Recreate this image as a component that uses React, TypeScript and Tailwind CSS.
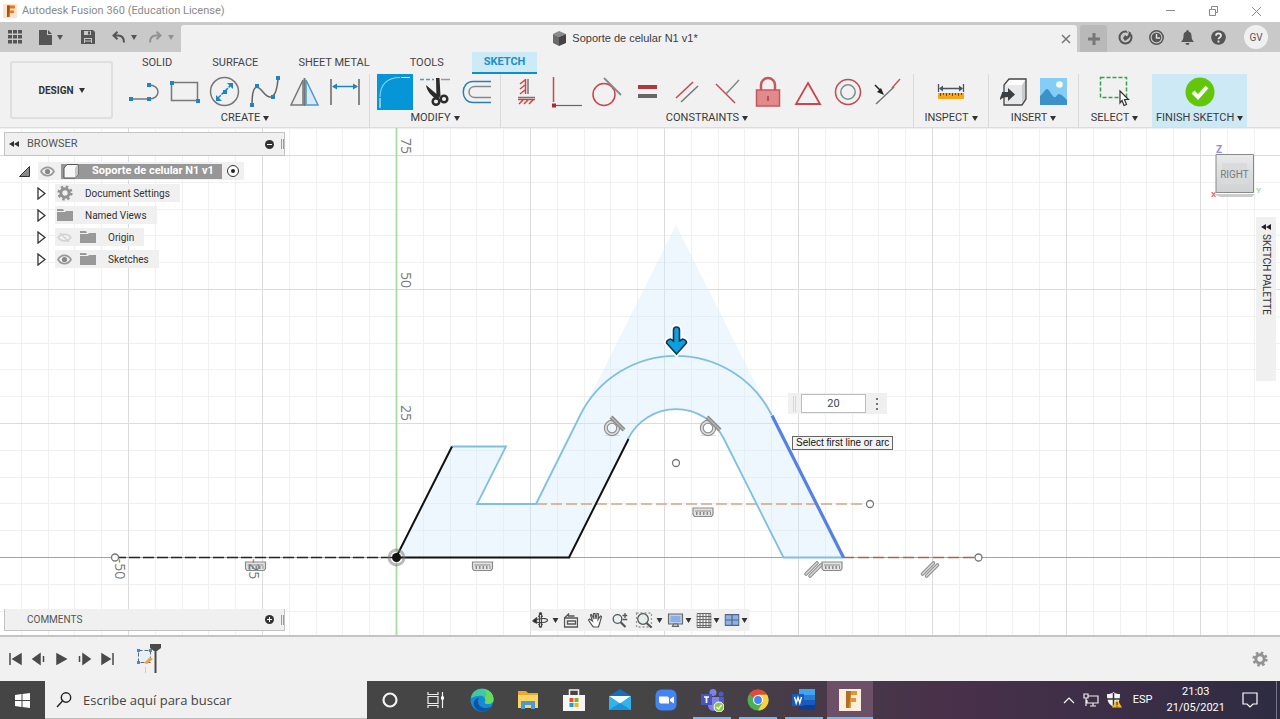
import React, { useState } from "react";

interface ToolProps {
  label: string;
  children: React.ReactNode;
  active?: boolean;
}

interface GroupProps {
  title: string;
  className?: string;
  last?: boolean;
  children: React.ReactNode;
}

const Caret = ({ className = "text-[#333]" }: { className?: string }) => (
  <svg width="6" height="5" viewBox="0 0 6 5" className={className}>
    <path d="M0 0h6L3 5z" fill="currentColor" />
  </svg>
);

const Tool = ({ label, children, active }: ToolProps) => (
  <button aria-label={label} className={active ? "h-9 w-9 bg-[#0696d7]" : "h-9 w-9"}>
    <svg width="36" height="36" viewBox="0 0 36 36" fill="none">
      {children}
    </svg>
  </button>
);

const Group = ({ title, className = "", last, children }: GroupProps) => (
  <div
    className={`flex flex-col items-center ${className} ${last ? "" : "border-r border-[#dadada]"}`}
  >
    <div className="flex gap-1">{children}</div>
    <button className="flex h-[18px] items-center gap-[3px] text-[11px] whitespace-nowrap text-[#3a3a3a]">
      {title}
      <Caret />
    </button>
  </div>
);

/* ---------- title bar and document tabs ---------- */

const TitleBar = () => (
  <header className="flex h-[22px] items-center bg-white pr-[18px] pl-[3px]">
    <svg width="14" height="14" viewBox="0 0 14 14">
      <rect width="14" height="14" rx="1" fill="#fbe3cd" />
      <path d="M4 1.500h8v3H7v2h4v2.500H7V13H4z" fill="#e07b1f" />
      <path d="M4 1.500h3L5.500 13H4z" fill="#a9500d" />
    </svg>
    <h1 className="ml-[5px] text-[11px] text-[#8a8a8a]">Autodesk Fusion 360 (Education License)</h1>
    <div className="ml-auto flex items-center gap-8 text-[#8a8a8a]">
      <button aria-label="Minimizar">
        <svg width="11" height="11" fill="none" stroke="currentColor">
          <path d="M1 4.500h9" />
        </svg>
      </button>
      <button aria-label="Restaurar">
        <svg width="11" height="11" fill="none" stroke="currentColor">
          <path d="M1.500 3.500h6v6h-6zM3.500 3V.5h6v6H8" />
        </svg>
      </button>
      <button aria-label="Cerrar">
        <svg width="11" height="11" fill="none" stroke="currentColor">
          <path d="M1 1l9 9M10 1l-9 9" />
        </svg>
      </button>
    </div>
  </header>
);

const TabBar = () => (
  <div className="flex h-[30px] items-end bg-[#c9c9c9] text-[#555]">
    <div className="flex h-full w-[181px] items-center pl-2">
      <button aria-label="Data panel">
        <svg width="14" height="14" fill="currentColor">
          {[0, 5, 10].map((y) =>
            [0, 5, 10].map((x) => <rect key={`${x}-${y}`} x={x} y={y} width="4" height="3.500" />)
          )}
        </svg>
      </button>
      <button aria-label="File" className="ml-[17px] flex items-center gap-[5px]">
        <svg width="13" height="15" fill="currentColor">
          <path d="M0 0h8v5h5v10H0zM9 0l4 4H9z" />
        </svg>
        <Caret className="text-[#555]" />
      </button>
      <button aria-label="Save" className="ml-[18px]">
        <svg width="14" height="14" viewBox="0 0 14 14">
          <path d="M0 0h12l2 2v12H0z" fill="currentColor" />
          <path d="M3 1h7v4H3zM3 8h8v5H3z" fill="#c9c9c9" />
          <path d="M7 1.500h2v3H7zM4 9h6v1.500H4zM4 11.500h6V13H4z" fill="currentColor" />
        </svg>
      </button>
      <button aria-label="Undo" className="ml-[17px] flex items-center gap-[6px]">
        <svg width="13" height="12" fill="none" stroke="currentColor" strokeWidth="2">
          <path d="M5.500 .8L1.500 4.500l4 3.700M2 4.500h4c4 0 6 2 6 7" />
        </svg>
        <Caret className="text-[#555]" />
      </button>
      <button aria-label="Redo" className="ml-3 flex items-center gap-[6px] text-[#929292]">
        <svg width="13" height="12" fill="none" stroke="currentColor" strokeWidth="2">
          <path d="M7.500 .8l4 3.700-4 3.700M11 4.500H7C3 4.500 1 6.500 1 11.500" />
        </svg>
        <Caret className="text-[#929292]" />
      </button>
    </div>

    <div className="flex h-[27px] flex-1 items-center rounded-t-[3px] bg-[#f1f1f1] pr-[6px] pl-2">
      <div className="flex flex-1 items-center justify-center gap-[5px] font-['Liberation_Sans',sans-serif] text-[11px] text-[#3c3c3c]">
        <svg width="15" height="15" viewBox="0 0 15 15">
          <path d="M1 3l6-3 7 3-7 3z" fill="#8a8a8a" />
          <path d="M1 3l6 3v9l-6-3z" fill="#6a6a6a" />
          <path d="M7 6l7-3v9l-7 3z" fill="#444" />
        </svg>
        Soporte de celular N1 v1*
      </div>
      <button aria-label="Close document">
        <svg width="10" height="10" fill="none" stroke="#777" strokeWidth="1.500">
          <path d="M1 1l8 8M9 1l-8 8" />
        </svg>
      </button>
    </div>

    <button
      aria-label="New design"
      className="ml-[3px] flex h-[27px] w-[27px] items-center justify-center rounded-t-[3px] bg-[#b9b9b9]"
    >
      <svg width="12" height="12" fill="none" stroke="#777" strokeWidth="3">
        <path d="M6 0v12M0 6h12" />
      </svg>
    </button>
    <div className="flex h-full items-center gap-4 pr-3 pl-[11px]">
      <button aria-label="Extensions">
        <svg width="15" height="15" viewBox="0 0 15 15" fill="none">
          <circle cx="7.500" cy="7.500" r="6" stroke="currentColor" strokeWidth="2" />
          <path d="M5 8l2-3 2 1.500L12 2l2 2-3.500 4.500L7 11z" fill="currentColor" />
          <path d="M9 0l1.500 3M13 4l2-1" stroke="#c9c9c9" strokeWidth="1.200" />
        </svg>
      </button>
      <button aria-label="Job status">
        <svg width="15" height="15" viewBox="0 0 15 15" fill="none">
          <circle cx="7.500" cy="7.500" r="6.700" stroke="currentColor" strokeWidth="1.500" />
          <circle cx="7.500" cy="7.500" r="4.800" fill="currentColor" />
          <path d="M7.500 4v4H11" stroke="#dedede" strokeWidth="1.500" />
        </svg>
      </button>
      <button aria-label="Notifications">
        <svg width="15" height="15" viewBox="0 0 15 15" fill="currentColor">
          <path d="M7.500 0c1 0 1.200.8 1.200 1.400C11 2 11.500 4 11.500 6c0 3 1 4 2.500 6H1c1.500-2 2.500-3 2.500-6 0-2 .5-4 2.800-4.600C6.300.8 6.500 0 7.500 0zM5.500 13h4a2 2 0 01-4 0z" />
        </svg>
      </button>
      <button aria-label="Help">
        <svg width="15" height="15" viewBox="0 0 15 15" fill="none">
          <circle cx="7.500" cy="7.500" r="7.300" fill="currentColor" />
          <path
            d="M5 5.700c0-3.200 5-3.200 5 0 0 1.800-2.500 1.700-2.500 3.600M7.500 10.500v2"
            stroke="#e6e6e6"
            strokeWidth="1.800"
          />
        </svg>
      </button>
      <button className="ml-[2px] h-6 w-6 rounded-full bg-[#f0f0f0] text-[10px] text-[#555]">
        GV
      </button>
    </div>
  </div>
);

/* ---------- ribbon ---------- */

const tabs = ["SOLID", "SURFACE", "SHEET METAL", "TOOLS", "SKETCH"];

const Ribbon = () => {
  const [tab, setTab] = useState("SKETCH");

  return (
    <div className="flex border-b border-[#dcdcdc] bg-[#f1f1f1]">
      <div className="pt-[9px] pr-2 pl-[10px]">
        <button className="flex h-[58px] w-[103px] items-center justify-center gap-[5px] rounded-[3px] border-2 border-[#dfdfdf] text-[10px] font-bold text-[#333]">
          DESIGN
          <Caret />
        </button>
      </div>
      <div className="flex flex-1 flex-col">
        <nav className="flex gap-4 pl-[9px]">
          {tabs.map((name) => (
            <button
              key={name}
              onClick={() => setTab(name)}
              className={
                tab === name
                  ? "h-[22px] border-b-2 border-[#0a8fd0] bg-[#cdeaf7] px-3 text-[11px] font-bold text-[#1b8fc9]"
                  : "h-[22px] px-3 text-[11px] text-[#444]"
              }
            >
              {name}
            </button>
          ))}
        </nav>
        <div className="flex h-[53px]">
          <Group title="CREATE" className="px-[6px]">
            <Tool label="Line">
              <path d="M4 25h17M22 11c12 0 12 14 0 14" stroke="#777" strokeWidth="1.500" />
              <path d="M2 23h4v4H2zM20 23h4v4h-4zM20 9h4v4h-4z" fill="#1f84c4" />
            </Tool>
            <Tool label="Rectangle">
              <path d="M4.500 8.500h26v18h-26z" stroke="#777" strokeWidth="1.500" />
              <path d="M3 7h4v4H3zM29 25h4v4h-4z" fill="#1f84c4" />
            </Tool>
            <Tool label="Circle">
              <circle cx="17.500" cy="17.500" r="14" stroke="#777" strokeWidth="1.500" />
              <path d="M11 24l13-13" stroke="#1f84c4" strokeWidth="1.500" strokeDasharray="4 1" />
              <path d="M9 27v-6l6 6zM26 9v6l-6-6zM16 16h4v4h-4z" fill="#1f84c4" />
            </Tool>
            <Tool label="Spline">
              <path d="M5 31C5 8 11 12 16 18s13 11 15-13" stroke="#666" strokeWidth="1.500" />
              <path d="M3 29h4v4H3zM8 10h4v4H8zM24 21h4v4h-4zM29 2h4v4h-4z" fill="#1f84c4" />
            </Tool>
            <Tool label="Mirror">
              <path d="M16 6v25H4z" fill="#ececec" stroke="#777" strokeWidth="1.500" />
              <path d="M19 6v25h12z" fill="#d9eaf6" stroke="#4a9bd0" strokeWidth="1.500" />
              <path d="M17.500 4v28" stroke="#777" strokeWidth="2" />
            </Tool>
            <Tool label="Sketch dimension">
              <path d="M4 5v26M32 5v26" stroke="#666" strokeWidth="1.500" />
              <path d="M6 12.500h24" stroke="#1f84c4" strokeWidth="1.500" />
              <path d="M5 12.500l5-3v6zM31 12.500l-5-3v6z" fill="#1f84c4" />
            </Tool>
          </Group>

          <Group title="MODIFY" className="px-[7px]">
            <Tool label="Fillet" active>
              <path d="M3 34V24M24 3.500h9" stroke="#cfeefc" strokeWidth="1.200" />
              <path d="M3 23C3 10 11 3.500 23 3.500" stroke="#7fd3f7" strokeWidth="1.200" />
            </Tool>
            <Tool label="Trim">
              <path d="M3 5.500h14" stroke="#4a9bd0" strokeWidth="1.500" strokeDasharray="4 2" />
              <path d="M24 5.500h9" stroke="#999" strokeWidth="1.500" />
              <path d="M9 11l14 12-3 3C15 22 10 18 9 11zM19 4h3.500l1 18-4 3z" fill="#2b2b2b" />
              <circle cx="19" cy="27.500" r="3.300" stroke="#2b2b2b" strokeWidth="2.500" />
              <circle cx="27" cy="25" r="3.300" stroke="#2b2b2b" strokeWidth="2.500" />
            </Tool>
            <Tool label="Offset">
              <path d="M34 7.500H16c-13 0-13 21 0 21h18" stroke="#2a7fb8" strokeWidth="1.500" />
              <path d="M34 12.500H18c-8 0-8 11 0 11h16" stroke="#888" strokeWidth="1.500" />
            </Tool>
          </Group>

          <Group title="CONSTRAINTS" className="px-2">
            <Tool label="Horizontal / Vertical">
              <path d="M19 5v15M9 23.500h17" stroke="#777" strokeWidth="1.500" />
              <path
                d="M16.500 5v15M9 25.500h17M16 6l-5 4M16 11l-5 4M16 16l-5 4M14 26l-4 4M19 26l-4 4M24 26l-4 4"
                stroke="#c8464c"
                strokeWidth="1.500"
              />
            </Tool>
            <Tool label="Coincident">
              <path d="M4.500 3v25" stroke="#c8464c" strokeWidth="1.500" />
              <path d="M6 31.500h27" stroke="#666" strokeWidth="1.200" />
              <path d="M3 29.500h4v4H3z" fill="#b4262e" />
            </Tool>
            <Tool label="Tangent">
              <circle cx="15" cy="20.500" r="11" stroke="#c8464c" strokeWidth="1.500" />
              <path d="M15 4l17 17" stroke="#888" strokeWidth="1.800" />
            </Tool>
            <Tool label="Equal">
              <path d="M9 11h19v4H9z" fill="#b4363d" />
              <path d="M9 20h19v4H9z" fill="#666" />
            </Tool>
            <Tool label="Parallel">
              <path d="M7 24L24 8" stroke="#c8464c" strokeWidth="1.500" />
              <path d="M12 28l17-16" stroke="#777" strokeWidth="1.500" />
            </Tool>
            <Tool label="Perpendicular">
              <path d="M7 10l19 19" stroke="#c8464c" strokeWidth="1.500" />
              <path d="M17 20L30 6" stroke="#888" strokeWidth="1.500" />
            </Tool>
            <Tool label="Fix / Unfix">
              <path d="M12 16v-5a7 7 0 0114 0v5" stroke="#c8575c" strokeWidth="2.500" />
              <path d="M7.500 16h23v16h-23z" fill="#e08a8c" stroke="#c8575c" strokeWidth="1.500" />
              <path d="M19 22v5" stroke="#b4363d" strokeWidth="1.500" />
            </Tool>
            <Tool label="Midpoint">
              <path d="M19 9l12 21H7z" stroke="#c8464c" strokeWidth="1.800" />
            </Tool>
            <Tool label="Concentric">
              <circle cx="19" cy="18" r="12.500" stroke="#c8464c" strokeWidth="1.500" />
              <circle cx="19" cy="18" r="7.200" stroke="#779090" strokeWidth="1.500" />
            </Tool>
            <Tool label="Collinear">
              <path d="M7 30l18-17" stroke="#777" strokeWidth="1.500" />
              <path d="M23 14l8-9" stroke="#c8575c" strokeWidth="1.500" />
              <path d="M6 11l6 6" stroke="#222" strokeWidth="1.500" />
              <path d="M15 21l-7-3 4-4z" fill="#222" />
            </Tool>
          </Group>

          <Group title="INSPECT" className="w-[75px]">
            <Tool label="Measure">
              <path d="M5.500 10v8M30.500 10v8M7 14.500h22" stroke="#44546a" strokeWidth="1.300" />
              <path d="M6 14.500l4-3v6zM30 14.500l-4-3v6z" fill="#44546a" />
              <path d="M5 19h26v6H5z" fill="#f9a51a" />
              <path
                d="M7.500 19v3M10.500 19v2M13.500 19v3M16.500 19v2M19.500 19v3M22.500 19v2M25.500 19v3M28.500 19v2"
                stroke="#6b4a10"
              />
            </Tool>
          </Group>

          <Group title="INSERT" className="w-[90px]">
            <Tool label="Insert derive">
              <path d="M8 11l5-6h17l-4 6z" fill="#fff" />
              <path d="M8 11h18v20H8z" fill="#e6e8ea" />
              <path d="M26 11l4-6v20l-4 6z" fill="#c7cbce" />
              <path d="M8 31V11l5-6h17v20l-4 6z" stroke="#444" strokeWidth="1.300" />
              <path d="M4 18h8v-4l7 6.500-7 6.500v-4c-4 0-6 1-8 3 0-4 2-5 2-8z" fill="#3a3f44" />
            </Tool>
            <Tool label="Canvas">
              <path d="M4 4h27v27H4z" fill="#84cdf6" />
              <circle cx="23.500" cy="10.500" r="3.300" fill="#fffbe6" />
              <path d="M4 22c3-2 5-7 7-7s5 7 7 8 3-3 5-3 5 3 8 6v5H4z" fill="#3b91c8" />
            </Tool>
          </Group>

          <Group title="SELECT" className="w-[71px]" last>
            <Tool label="Window selection">
              <path
                d="M3.500 3.500h26v20h-26z"
                stroke="#35a04f"
                strokeWidth="1.500"
                strokeDasharray="4 2"
              />
              <path
                d="M23 17l8.500 8.500h-4l2 5-2.500 1-2-5L23 29z"
                fill="#fff"
                stroke="#333"
                strokeWidth="1.200"
              />
            </Tool>
          </Group>
          <Group title="FINISH SKETCH" className="ml-[2px] bg-[#cce9f5] px-1" last>
            <Tool label="Finish sketch">
              <circle cx="18" cy="18" r="14.500" fill="#62c60a" />
              <path d="M11 18l5 5 9-10" stroke="#fff" strokeWidth="4" />
            </Tool>
          </Group>
        </div>
      </div>
    </div>
  );
};

/* ---------- browser tree ---------- */

const Eye = ({ off }: { off?: boolean }) => (
  <svg width="15" height="11" viewBox="0 0 15 11" fill="none">
    {off ? (
      <path
        d="M1 5.500C4 1 11 1 14 5.500 11 10 4 10 1 5.500zM3 1l9 9"
        stroke="#d2d2d2"
        strokeWidth="1.500"
      />
    ) : (
      <>
        <path d="M1 5.500C4 0 11 0 14 5.500 11 11 4 11 1 5.500z" stroke="#999" strokeWidth="1.600" />
        <circle cx="7.500" cy="5.500" r="2.600" fill="#888" />
      </>
    )}
  </svg>
);

const Folder = () => (
  <svg width="16" height="12" viewBox="0 0 16 12" fill="#999">
    <path d="M0 0h6l1 2H0zM0 3h8l1-1h7v10H0z" />
  </svg>
);

const Gear = () => (
  <svg width="16" height="16" viewBox="0 0 16 16" fill="none" stroke="#929292">
    <circle cx="8" cy="8" r="4.200" strokeWidth="3" />
    <circle cx="8" cy="8" r="6.400" strokeWidth="2.400" strokeDasharray="2.500 2.527" />
  </svg>
);

const nodes = [
  { name: "Document Settings", icon: "gear", eye: "" },
  { name: "Named Views", icon: "folder", eye: "" },
  { name: "Origin", icon: "folder", eye: "off" },
  { name: "Sketches", icon: "folder", eye: "on" },
];

const Browser = () => (
  <aside className="relative z-10 flex w-[281px] flex-col justify-between py-1 text-[#333]">
    <div>
      <div className="flex h-6 items-center border border-[#c4c4c4] bg-[#f0f0f0] pl-1 text-[#555]">
        <button aria-label="Collapse browser">
          <svg width="10" height="6" fill="#333">
            <path d="M5 0v6L0 3zM10 0v6L5 3z" />
          </svg>
        </button>
        <h2 className="ml-2 flex-1 text-[11px]">BROWSER</h2>
        <button aria-label="Hide browser">
          <svg width="9" height="9">
            <circle cx="4.500" cy="4.500" r="4.500" fill="#333" />
            <path d="M2 4.500h5" stroke="#fff" />
          </svg>
        </button>
        <span className="ml-[7px] h-[10px] w-[3px] border-x border-[#999]" />
      </div>
      <ul className="pt-1 pl-[15px] text-[10px]">
        <li className="flex h-[22px] items-center">
          <svg width="11" height="11">
            <path d="M.5 10.500L10.500.5v10z" fill="#888" stroke="#333" />
          </svg>
          <div className="ml-2 flex h-[18px] items-center bg-[#f0f0f0] pl-[2px]">
            <Eye />
            <div className="ml-[6px] flex h-[15px] items-center bg-[#979797] pr-2 pl-[2px] text-[11px] font-bold text-white">
              <svg width="16" height="15" viewBox="0 0 16 15">
                <path d="M1 4l3-3.500h11v10L12 14H1z" fill="#f7f7f7" stroke="#555" />
                <path d="M12 14V4l3-3.500v10z" fill="#c8c8c8" />
              </svg>
              <span className="ml-[13px]">Soporte de celular N1 v1</span>
            </div>
            <label className="mx-[5px] flex h-4 items-center">
              <input
                type="radio"
                defaultChecked
                aria-label="Activate component"
                className="h-3 w-3 appearance-none rounded-full border border-[#333] bg-white p-[3px] before:block before:h-1 before:w-1 before:rounded-full before:bg-[#222]"
              />
            </label>
          </div>
        </li>
        {nodes.map((node) => (
          <li key={node.name} className="flex h-[22px] items-center pl-[18px]">
            <button aria-label={`Expand ${node.name}`}>
              <svg width="9" height="13" fill="#fff" stroke="#333" strokeWidth="1.300">
                <path d="M1 1v11l7-5.500z" />
              </svg>
            </button>
            <div className="ml-[9px] flex h-[18px] items-center bg-[#f0f0f0] pr-[10px] pl-[2px]">
              {node.eye && (
                <span className="mr-2">
                  <Eye off={node.eye === "off"} />
                </span>
              )}
              {node.icon === "gear" ? <Gear /> : <Folder />}
              <span className="ml-3">{node.name}</span>
            </div>
          </li>
        ))}
      </ul>
    </div>
    <div className="flex h-[22px] items-center border border-t-0 border-[#c4c4c4] bg-[#f0f0f0] pl-1 text-[#555]">
      <h2 className="ml-[18px] flex-1 text-[10px]">COMMENTS</h2>
      <button aria-label="Add comment">
        <svg width="9" height="9">
          <circle cx="4.500" cy="4.500" r="4.500" fill="#333" />
          <path d="M2 4.500h5M4.500 2v5" stroke="#fff" />
        </svg>
      </button>
      <span className="ml-[7px] h-[10px] w-[3px] border-x border-[#999]" />
    </div>
  </aside>
);

/* ---------- sketch ---------- */

const HorizontalMark = ({ x, y }: { x: number; y: number }) => (
  <g transform={`translate(${x} ${y})`}>
    <path d="M-10-4h20v6.500l-1.500 2h-17l-1.500-2z" fill="#e4e4e4" stroke="#8a8a8a" strokeWidth="1.200" />
    <path d="M-8-1H8" stroke="#8a8a8a" />
    <path d="M-7 1.500H8" stroke="#8a8a8a" strokeWidth="3" strokeDasharray="1.500 2" />
  </g>
);

const ParallelMark = ({ x, y }: { x: number; y: number }) => (
  <g transform={`translate(${x} ${y})`} strokeLinecap="round">
    <path d="M-7 5L4-6M-3 7L8-4" stroke="#8c8c8c" strokeWidth="3.600" />
    <path d="M-7 5L4-6M-3 7L8-4" stroke="#d6d6d6" strokeWidth="1.600" />
  </g>
);

const TangentMark = ({ x, y }: { x: number; y: number }) => (
  <g transform={`translate(${x} ${y})`} fill="none">
    <path d="M-7 8.500H8" stroke="#ddd" />
    <circle cy="1" r="6.200" stroke="#8a8a8a" strokeWidth="4" />
    <circle cy="1" r="6.200" stroke="#d8d8d8" strokeWidth="2" />
    <path d="M-1-10L12 3" stroke="#8a8a8a" strokeWidth="4" />
    <path d="M-1-10L12 3" stroke="#b4b4b4" strokeWidth="1.500" />
  </g>
);

const rulers = [
  { text: "75", x: 401, y: 18 },
  { text: "50", x: 401, y: 152 },
  { text: "25", x: 401, y: 285 },
  { text: "-50", x: 115, y: 441 },
  { text: "-25", x: 249, y: 441 },
];

const Sketch = () => (
  <svg className="absolute inset-0 h-full w-full" fill="none">
    <defs>
      <pattern id="grid" x="396" y="429" width="134" height="134" patternUnits="userSpaceOnUse">
        <path
          d="M27.500 0v134M54.500 0v134M80.500 0v134M107.500 0v134M0 27.500h134M0 54.500h134M0 80.500h134M0 107.500h134"
          stroke="#f0f0f1"
        />
        <path d="M.5 0v134M0 .5h134" stroke="#dadbdd" />
      </pattern>
    </defs>
    <rect width="100%" height="100%" fill="#fff" />
    <rect width="100%" height="100%" fill="url(#grid)" />
    <line x1="396.500" y1="0" x2="396.500" y2="100%" stroke="#a9dba4" strokeWidth="1.800" />
    <line x1="0" y1="429.500" x2="100%" y2="429.500" stroke="#cf8f8b" />

    {/* profile fill, including the corner the fillet removes */}
    <path
      d="M396 429.500L452 318.500H506L477 376H536L676 97 843 429.500H783.500L724 311A53.500 53.500 0 00628 311L569 429.500z"
      fill="#d5ebfa"
      fillOpacity=".42"
    />

    <path d="M115 429.500H396" stroke="#2b1f24" strokeWidth="1.500" strokeDasharray="11 3" />
    <path d="M536 376H866" stroke="#d9a383" strokeWidth="1.500" strokeDasharray="11 4" />
    <path d="M843 429.500H975" stroke="#a8664e" strokeWidth="1.500" strokeDasharray="11 4" />

    <g stroke="#7fbfe2" strokeWidth="1.800">
      <path d="M452 318.500H506L477 376H536L580.300 287A107 107 0 01771.700 287" />
      <path d="M628 311A53.500 53.500 0 01724 311L783.500 429.500H843" />
    </g>
    <path d="M452 318.500L396 429.500H569L628.500 311" stroke="#111" strokeWidth="2" />
    <path d="M772 287.500L843.500 429.500" stroke="#5580e6" strokeWidth="3.200" />

    <circle cx="396.500" cy="429.500" r="7.500" stroke="#777" strokeOpacity=".5" strokeWidth="3" />
    <circle cx="396.500" cy="429.500" r="4.500" fill="#111" />
    <g fill="#fff" stroke="#777" strokeWidth="1.300">
      <circle cx="115" cy="429.500" r="3.500" />
      <circle cx="676" cy="335" r="3.500" />
      <circle cx="870" cy="376" r="3.500" />
      <circle cx="978.500" cy="429.500" r="3.500" />
    </g>

    <HorizontalMark x={255.500} y={438} />
    <HorizontalMark x={482.500} y={438} />
    <HorizontalMark x={703} y={384} />
    <HorizontalMark x={832} y={438} />
    <ParallelMark x={813} y={441} />
    <ParallelMark x={929.500} y={441} />
    <TangentMark x={612} y={299} />
    <TangentMark x={708} y={299} />

    <g fill="#777" fontSize="14" fontFamily="'Open Sans', sans-serif">
      {rulers.map((r) => (
        <text key={r.text} transform={`translate(${r.x} ${r.y}) rotate(90)`} textAnchor="middle">
          {r.text}
        </text>
      ))}
    </g>

    <path
      d="M673.500 202q0-3 3-3t3 3v11l3-2q4 1 4 4l-10 11-10-11q0-3 4-4l3 2z"
      stroke="#fff"
      strokeWidth="5"
    />
    <path
      d="M673.500 202q0-3 3-3t3 3v11l3-2q4 1 4 4l-10 11-10-11q0-3 4-4l3 2z"
      fill="#0b9fe3"
      stroke="#16384a"
      strokeWidth="1.600"
    />
  </svg>
);

const ViewCube = () => (
  <svg className="absolute top-3 right-[14px]" width="60" height="62" viewBox="1206 140 60 62">
    <defs>
      <linearGradient id="face" x1="0" y1="0" x2="0" y2="1">
        <stop offset="0" stopColor="#e9eaea" />
        <stop offset="1" stopColor="#cfd1d2" />
      </linearGradient>
    </defs>
    <path d="M1214 194h41l-3 3h-32z" fill="#ccc" />
    <path d="M1216 154.500h37.500v38H1216z" fill="url(#face)" stroke="#888" />
    <path d="M1222 163h25v21h-25z" fill="#d8dadb" />
    <g fontFamily="Roboto, sans-serif">
      <text x="1234.500" y="178" fontSize="10" fill="#777c82" textAnchor="middle">
        RIGHT
      </text>
      <text x="1216" y="153" fontSize="10" fontWeight="700" fill="#8b8fe0">
        Z
      </text>
      <text x="1211" y="197" fontSize="8" fontWeight="700" fill="#e2686e">
        X
      </text>
      <text x="1256" y="193" fontSize="8" fontWeight="700" fill="#9be3a0">
        Y
      </text>
    </g>
  </svg>
);

const NavBar = () => (
  <div className="absolute bottom-1 left-1/2 flex h-[22px] -translate-x-1/2 items-center bg-[#f0f0f0] px-[2px]">
    <button aria-label="Orbit" className="flex items-center gap-1">
      <svg width="16" height="16" viewBox="0 0 16 16" fill="none" stroke="#444" strokeWidth="1.200">
        <path d="M7 1h2v14H7zM6 5l2-4 2 4M6 12l2 3 2-3" />
        <path d="M3 10C-1 7 15 5 15 8s-8 3-12 2" />
        <path d="M0 9l4-3v5z" fill="#222" />
      </svg>
      <Caret />
    </button>
    <button aria-label="Look at" className="ml-[5px]">
      <svg width="15" height="15" viewBox="0 0 15 15" fill="none" stroke="#555" strokeWidth="1.300">
        <path d="M1 5h13v9H1zM4 8h8v3H4zM1 5l4-4v2h6" />
      </svg>
    </button>
    <button aria-label="Pan" className="ml-[9px]">
      <svg width="16" height="16" viewBox="0 0 16 16" fill="#fff" stroke="#555" strokeWidth="1.200">
        <path d="M5 14L1 8l1-1 3 2-2-6 1-.5L6.500 7 6 1.500h1.500L8.500 7l1-5.500 1.500.5-.5 5.500L13 4l1 .5L12.500 10 11 15H6z" />
      </svg>
    </button>
    <button aria-label="Zoom" className="ml-2">
      <svg width="16" height="16" viewBox="0 0 16 16" fill="none" stroke="#555" strokeWidth="1.300">
        <circle cx="6" cy="7" r="4.300" fill="#e8f1f3" />
        <path d="M9 10l5 5" strokeWidth="2.200" />
        <path d="M11 3.500h5M13.500 1v5M11 7.500h5" />
      </svg>
    </button>
    <button aria-label="Zoom window" className="ml-2 flex items-center gap-1">
      <svg width="17" height="16" viewBox="0 0 17 16" fill="none" stroke="#555" strokeWidth="1.300">
        <path d="M1 1h15v14H1z" stroke="#999" strokeDasharray="2 2" />
        <circle cx="7.500" cy="7" r="5.300" fill="#e1efed" />
        <path d="M11 11l5 4.500" strokeWidth="2.200" />
      </svg>
      <Caret />
    </button>
    <button aria-label="Display settings" className="ml-[5px] flex items-center gap-[2px]">
      <svg width="16" height="14" viewBox="0 0 16 14" stroke="#666" strokeWidth="1.200">
        <path d="M1 1h14v10H1z" fill="#bcd0f0" />
        <path d="M3 3h10v6H3z" fill="#8aaee6" stroke="none" />
        <path d="M6 11h4l1 2.400H5z" fill="#ddd" />
      </svg>
      <Caret />
    </button>
    <button aria-label="Grid and snaps" className="ml-[5px] flex items-center gap-[2px]">
      <svg width="15" height="15" fill="none" stroke="#666">
        <path d="M.5.500h14v14H.500zM3.500 0v15M6.500 0v15M9.500 0v15M12.500 0v15M0 3.500h15M0 6.500h15M0 9.500h15M0 12.500h15" />
      </svg>
      <Caret />
    </button>
    <button aria-label="Viewports" className="ml-[5px] flex items-center gap-[2px]">
      <svg width="15" height="12" fill="#8fb1e6" stroke="#55657e" strokeWidth="1.200">
        <path d="M.600.600h13.800v10.800H.600zM7.500 0v12M0 6h15" />
      </svg>
      <Caret />
    </button>
  </div>
);

const Canvas = () => (
  <main className="relative flex min-h-[400px] flex-1 overflow-hidden pl-1">
    <Sketch />
    <Browser />

    <div className="absolute top-[265px] left-[788px] flex h-[21px] items-center bg-[#f0f0f0] pr-2">
      <span className="mx-[5px] h-4 w-[3px] border-x border-[#d8d8d8]" />
      <input
        aria-label="Fillet radius"
        defaultValue="20"
        className="h-[19px] w-[65px] border border-[#bdbdbd] bg-white text-center text-[11px] text-[#444]"
      />
      <button aria-label="More options" className="ml-[10px]">
        <svg width="3" height="12" fill="#777">
          <path d="M0 0h2v2H0zM0 5h2v2H0zM0 10h2v2H0z" />
        </svg>
      </button>
    </div>
    <div
      role="tooltip"
      className="absolute top-[308px] left-[792px] h-[14px] border border-[#666] bg-[#f4f4f4] px-[3px] font-['Liberation_Sans',sans-serif] text-[10px] leading-3 whitespace-nowrap text-[#111]"
    >
      Select first line or arc
    </div>

    <ViewCube />
    <button className="absolute top-[89px] right-1 flex h-[164px] w-5 flex-col items-center gap-1 bg-[#f0f0f0] pt-[7px] text-[10px] text-[#333]">
      <svg width="10" height="6" fill="#222">
        <path d="M5 0v6L0 3zM10 0v6L5 3z" />
      </svg>
      <span className="leading-3 [writing-mode:vertical-rl]">SKETCH PALETTE</span>
    </button>
    <NavBar />
  </main>
);

/* ---------- timeline ---------- */

const playback = [
  { label: "Go to start", d: "M1 1v12M12 2v10L4 7z" },
  { label: "Step back", d: "M8 2v10L1 7zM11.500 4v6" },
  { label: "Play", d: "M2 2v10l9-5z" },
  { label: "Step forward", d: "M5 2v10l7-5zM1.500 4v6" },
  { label: "Go to end", d: "M12 1v12M1 2v10l8-5z" },
];

const Timeline = () => (
  <div className="flex h-[46px] items-center border-t-2 border-[#c4c4c4] bg-[#f1f1f1] px-[9px]">
    <div className="flex gap-[10px]">
      {playback.map((b) => (
        <button key={b.label} aria-label={b.label}>
          <svg width="13" height="14" fill="#4a4a4a" stroke="#4a4a4a" strokeWidth="1.500">
            <path d={b.d} />
          </svg>
        </button>
      ))}
    </div>
    <button aria-label="Sketch1" className="ml-[22px]">
      <svg width="26" height="32" viewBox="0 0 26 32" fill="none">
        <path d="M0 5h16v16H0z" fill="#e3f1fa" />
        <path d="M2.500 7.500h12v12h-12z" stroke="#666" strokeDasharray="4 2" />
        <path d="M1 6h3v3H1zM1 18h3v3H1zM13 6h3v3h-3z" fill="#3d8fc4" />
        <path d="M8 20l6-6 3 2-6 5z" fill="#f2a14b" />
        <path d="M9.500 24v6" stroke="#e6c9ac" />
        <path d="M14 1h11v4l-4 3h-3l-4-3z" fill="#4a4a4a" />
        <path d="M19.500 6v24" stroke="#4a4a4a" strokeWidth="2" />
      </svg>
    </button>
    <button aria-label="Timeline settings" className="ml-auto pr-[3px]">
      <Gear />
    </button>
  </div>
);

/* ---------- Windows taskbar ---------- */

const apps = [
  {
    name: "Cortana",
    running: false,
    icon: <circle cx="12" cy="12" r="6.500" fill="none" stroke="#f2f2f2" strokeWidth="2.200" />,
  },
  {
    name: "Vista de tareas",
    running: false,
    icon: (
      <g fill="none" stroke="#eee" strokeWidth="1.200">
        <path d="M4 8.500h10v7H4zM4 4v2.500h10V4M4 20v-2.500h10V20M18.500 4v16" />
        <path d="M17 8.500h3v3h-3z" fill="#fff" stroke="none" />
      </g>
    ),
  },
  {
    name: "Microsoft Edge",
    running: false,
    icon: (
      <>
        <circle cx="12" cy="12" r="11.500" fill="#1689d8" />
        <path d="M1 10C3-3 24-2 23.500 12c-.3 4-6 5-9 3 3-4-1-8-6-7-4 0-6 2-7.500 2z" fill="#41c9a0" />
        <path d="M12 1c7 0 12 5 11.500 11-.3 4-6 5-9 3 2-2 1-4 0-5 4-2 2-8-2.500-9z" fill="#6bd95c" />
        <path d="M8 12c-1 6 6 10 13 7-4 6-14 6-17-1-1-4 1-8 5-8z" fill="#0d55a3" />
      </>
    ),
  },
  {
    name: "Explorador de archivos",
    running: false,
    icon: (
      <>
        <path d="M2 3h8l2 2h10v15H2z" fill="#e8a92c" />
        <path d="M2 7h20v13H2z" fill="#fcd462" />
        <path d="M5 13h14v8h-4v-4H9v4H5z" fill="#4a9ad4" />
      </>
    ),
  },
  {
    name: "Microsoft Store",
    running: false,
    icon: (
      <>
        <path d="M7.500 7V2h9v5" fill="none" stroke="#f5f5f5" strokeWidth="1.500" />
        <path d="M1 7h22v16H1z" fill="#f5f5f5" />
        <path d="M7.500 10h4v4h-4z" fill="#e8502c" />
        <path d="M12.500 10h4v4h-4z" fill="#7fb51a" />
        <path d="M7.500 15h4v4h-4z" fill="#1e9be0" />
        <path d="M12.500 15h4v4h-4z" fill="#f6b50e" />
      </>
    ),
  },
  {
    name: "Correo",
    running: false,
    icon: (
      <>
        <path d="M1 8l11-7 11 7v14H1z" fill="#1470bb" />
        <path d="M1 8h22L12 16z" fill="#f4f8fb" />
        <path d="M1 8l11 7.500L23 8v14H1z" fill="#31b3ef" />
        <path d="M1 22l11-7 11 7z" fill="#1b93da" />
      </>
    ),
  },
  {
    name: "Zoom",
    running: false,
    icon: (
      <>
        <rect x="1.500" y="1.500" width="21" height="21" rx="6" fill="#4384f2" />
        <path d="M5 8.500h8q2 0 2 2v5H7q-2 0-2-2zM16 11l4-2.500v7L16 13z" fill="#fff" />
      </>
    ),
  },
  {
    name: "Microsoft Teams",
    running: true,
    icon: (
      <>
        <circle cx="13" cy="4.500" r="3.500" fill="#7b83eb" />
        <circle cx="21" cy="6" r="2.500" fill="#5059c9" />
        <path d="M15 9h9v6q-1 5-6 5z" fill="#5059c9" />
        <path d="M8 9h11v8q-2 6-6 6-5-1-5-6z" fill="#7b83eb" />
        <path d="M1 6h11v11H1z" fill="#4b53bc" />
        <path d="M4 9h5M6.500 9v6" stroke="#fff" strokeWidth="1.700" />
        <circle cx="19" cy="19" r="5" fill="#8cc63e" stroke="#fff" />
        <path d="M16.500 19l2 2 3-4" fill="none" stroke="#fff" strokeWidth="1.400" />
      </>
    ),
  },
  {
    name: "Google Chrome",
    running: true,
    icon: (
      <>
        <circle cx="12" cy="12" r="10.500" fill="#4caf50" />
        <path d="M2.900 6.700A10.500 10.500 0 0121.100 6.700H12V12z" fill="#e5493a" />
        <path d="M12 6.700h9.100A10.500 10.500 0 0112 22.500l4.600-8z" fill="#fdd23c" />
        <circle cx="12" cy="12" r="5" fill="#fff" />
        <circle cx="12" cy="12" r="3.900" fill="#4285f4" />
      </>
    ),
  },
  {
    name: "Word",
    running: true,
    icon: (
      <>
        <path d="M7 1h16v6H7z" fill="#41a5ee" />
        <path d="M7 7h16v5H7z" fill="#2b7cd3" />
        <path d="M7 12h16v5H7z" fill="#185abd" />
        <path d="M7 17h16v5H7z" fill="#103f91" />
        <path d="M0 6h12v12H0z" fill="#185abd" />
        <path d="M2.500 9l1.700 6L6 9.500 7.800 15l1.700-6" fill="none" stroke="#fff" strokeWidth="1.400" />
      </>
    ),
  },
  {
    name: "Fusion 360",
    running: true,
    icon: (
      <>
        <path d="M1 1h22v22H1z" fill="#fdeedd" />
        <path d="M8 3h11v4h-6v3h5v4h-5v6H8z" fill="#e39435" />
        <path d="M8 3h5l-2 17H8z" fill="#b06f27" />
      </>
    ),
  },
];

const Taskbar = () => (
  <footer className="flex h-[38px] bg-linear-to-r from-[#454545] from-50% via-[#48304a] via-75% to-[#2e2c42] font-['Open_Sans',sans-serif] text-white">
    <button aria-label="Inicio" className="flex w-[45px] items-center justify-center">
      <svg width="15" height="15" fill="#fff">
        <path d="M0 2l6.500-1v6H0zM7.500 1L15 0v7H7.500zM0 8h6.500v6L0 13zM7.500 8H15v7l-7.500-1z" />
      </svg>
    </button>
    <label className="flex w-[322px] items-center gap-[11px] border-b border-[#bbb] bg-[#f0f0f0] pl-[11px]">
      <svg width="16" height="16" fill="none" stroke="#222" strokeWidth="1.400">
        <circle cx="10" cy="5.500" r="4.700" />
        <path d="M6.500 9L1 15" />
      </svg>
      <input
        aria-label="Buscar"
        placeholder="Escribe aquí para buscar"
        className="min-w-0 flex-1 bg-transparent pt-[2px] text-[13px] placeholder:text-[#444]"
      />
    </label>
    {apps.map((app) => (
      <button
        key={app.name}
        aria-label={app.name}
        className={`flex w-[46px] flex-col items-center justify-between ${
          app.name === "Fusion 360" ? "bg-[#6b5068]" : ""
        }`}
      >
        <svg width="24" height="24" viewBox="0 0 24 24" className="mt-[7px]">
          {app.icon}
        </svg>
        {app.running && (
          <span
            className={
              app.name === "Fusion 360" ? "h-[2px] w-full bg-[#76b9ed]" : "h-[2px] w-[38px] bg-[#76b9ed]"
            }
          />
        )}
      </button>
    ))}
    <div className="ml-auto flex items-center font-[Roboto,sans-serif] text-[11px]">
      <button aria-label="Mostrar iconos ocultos">
        <svg width="12" height="8" fill="none" stroke="#fff" strokeWidth="1.200">
          <path d="M1 7l5-5 5 5" />
        </svg>
      </button>
      <button aria-label="Red" className="ml-2">
        <svg width="16" height="14" fill="none" stroke="#eee" strokeWidth="1.200">
          <path d="M5 3h10v7H4V7M10 10v3M7 13h6M1 1h4v4H1zM3 5v8" />
        </svg>
      </button>
      <button aria-label="Seguridad" className="ml-2">
        <svg width="15" height="16" viewBox="0 0 15 16">
          <path d="M6.500 0C8 1.500 10 2 13 2c0 6-1 10-6.500 13C1 12 0 8 0 2c3 0 5-.5 6.500-2z" fill="#f5f5f5" />
          <path d="M6.500 1v13M0 7h13" stroke="#333" strokeWidth="1.500" />
          <path d="M10 7l5 8.500H5z" fill="#fbb91f" />
          <path d="M10 10v3M10 13.800v1" stroke="#222" />
        </svg>
      </button>
      <button className="ml-[11px]">ESP</button>
      <button className="ml-[14px] text-center leading-4">
        21:03
        <br />
        21/05/2021
      </button>
      <button aria-label="Notificaciones" className="ml-[17px]">
        <svg width="16" height="16" fill="none" stroke="#fff" strokeWidth="1.200">
          <path d="M1 1h14v11h-4l-3 3-3-3H1z" />
        </svg>
      </button>
      <span className="mr-[3px] ml-[18px] h-[38px] w-px bg-[#77748a]" />
    </div>
  </footer>
);

const App = () => (
  <div className="flex min-h-screen flex-col overflow-x-hidden bg-white font-[Roboto,'Liberation_Sans',sans-serif]">
    <TitleBar />
    <TabBar />
    <Ribbon />
    <Canvas />
    <Timeline />
    <Taskbar />
  </div>
);

export default App;
